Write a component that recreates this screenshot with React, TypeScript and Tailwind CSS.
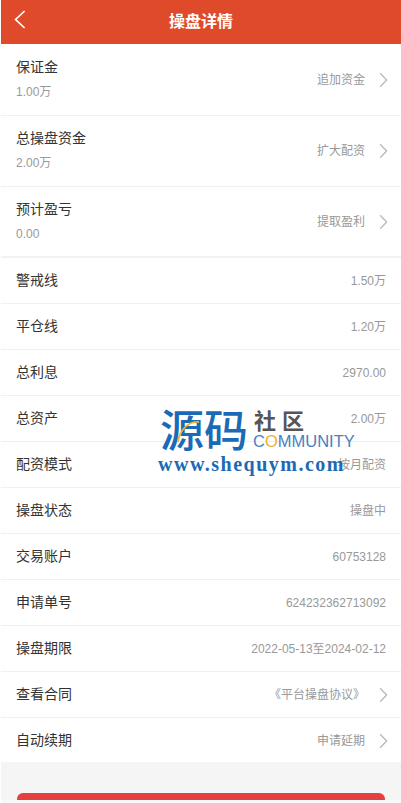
import React from "react";

const topRows = [
  { label: "保证金", value: "1.00万", action: "追加资金", height: "h-[72px]", pad: "pt-3" },
  { label: "总操盘资金", value: "2.00万", action: "扩大配资", height: "h-[71px]", pad: "pt-[11px]" },
  { label: "预计盈亏", value: "0.00", action: "提取盈利", height: "h-[69px]", pad: "pt-[11px]" },
];

const rows = [
  { label: "警戒线", value: "1.50万" },
  { label: "平仓线", value: "1.20万" },
  { label: "总利息", value: "2970.00" },
  { label: "总资产", value: "2.00万" },
  { label: "配资模式", value: "按月配资" },
  { label: "操盘状态", value: "操盘中" },
  { label: "交易账户", value: "60753128" },
  { label: "申请单号", value: "624232362713092" },
  { label: "操盘期限", value: "2022-05-13至2024-02-12" },
  { label: "查看合同", value: "《平台操盘协议》", arrow: true },
  { label: "自动续期", value: "申请延期", arrow: true },
];

const Arrow = () => (
  <svg width="9" height="16" viewBox="0 0 9 16" fill="none" className="ml-[14px] shrink-0">
    <path d="M1.2 1.2 L7.6 8 L1.2 14.8" stroke="#bbbbbb" strokeWidth="1.4" />
  </svg>
);

const App = () => {
  return (
    <div className="relative h-[803px] w-[401px] overflow-hidden bg-white pl-px font-['Liberation_Sans','Noto_Sans_CJK_SC',sans-serif]">
      <header className="relative flex h-11 items-center justify-center bg-[#df4a2a]">
        <svg width="12" height="19" viewBox="0 0 12 19" fill="none" className="absolute left-[13px] top-[10px]">
          <path d="M10.6 1 L1.6 9.5 L10.6 18" stroke="#ffffff" strokeWidth="1.7" />
        </svg>
        <h1 className="text-base font-bold text-white">操盘详情</h1>
      </header>

      <section className="border-b-2 border-[#f2f2f2]">
        {topRows.map((row, i) => (
          <div
            key={row.label}
            className={`flex ${row.height} items-center justify-between pl-[15px] pr-[13px] ${i < 2 ? "border-b border-[#f0f0f0]" : ""}`}
          >
            <div className={`self-start ${row.pad}`}>
              <p className="text-sm leading-[22px] text-[#333]">{row.label}</p>
              <p className="mt-[3px] text-xs leading-[22px] text-[#999]">{row.value}</p>
            </div>
            <div className="flex items-center">
              <span className="text-xs text-[#999]">{row.action}</span>
              <Arrow />
            </div>
          </div>
        ))}
      </section>

      <section>
        {rows.map((row, i) => (
          <div
            key={row.label}
            className={`flex items-center justify-between pl-[15px] ${row.arrow ? "pr-[13px]" : "pr-[15px]"} ${i < rows.length - 1 ? "h-[46px] border-b border-[#f0f0f0]" : "h-[44px] pt-[2px]"}`}
          >
            <span className="mb-[2px] text-sm text-[#333]">{row.label}</span>
            <div className="flex items-center">
              <span className="text-xs text-[#999]">{row.value}</span>
              {row.arrow && <Arrow />}
            </div>
          </div>
        ))}
      </section>

      <div className="h-[38px] bg-[#f5f5f5] px-4 pt-[31px]">
        <div className="h-[7px] rounded-t-md bg-[#e54040]" />
      </div>
      <div className="h-[3px] bg-[#f8f8f8]" />

      {/* watermark over the rows */}
      <div className="absolute left-[158px] top-[410px] w-[200px]">
        <div className="relative flex items-start pl-[2px]">
          <span className="whitespace-nowrap text-[44px] font-medium leading-[44px] text-[#1b6ab5]">源码</span>
          <svg width="24" height="24" viewBox="0 0 24 24" fill="none" className="absolute left-[18px] top-[10px]">
            <path d="M23 2 C14 1 4 8 2 22" stroke="#f0b030" strokeWidth="1.8" />
          </svg>
          <div className="ml-[6px]">
            <p className="whitespace-nowrap text-[22px] font-bold leading-[24px] tracking-[6px] text-[#555]">社区</p>
            <p className="-ml-px whitespace-nowrap text-[16.5px] leading-[15px] text-[#4a7fc0]">
              C<span className="text-[#f0b030]">O</span>MMUNITY
            </p>
          </div>
        </div>
        <p className="whitespace-nowrap font-['Liberation_Serif',serif] text-[20px] font-bold leading-[20px] tracking-[1.5px] text-[#1b6ab5]">
          www.shequym.com
        </p>
      </div>
    </div>
  );
};

export default App;
